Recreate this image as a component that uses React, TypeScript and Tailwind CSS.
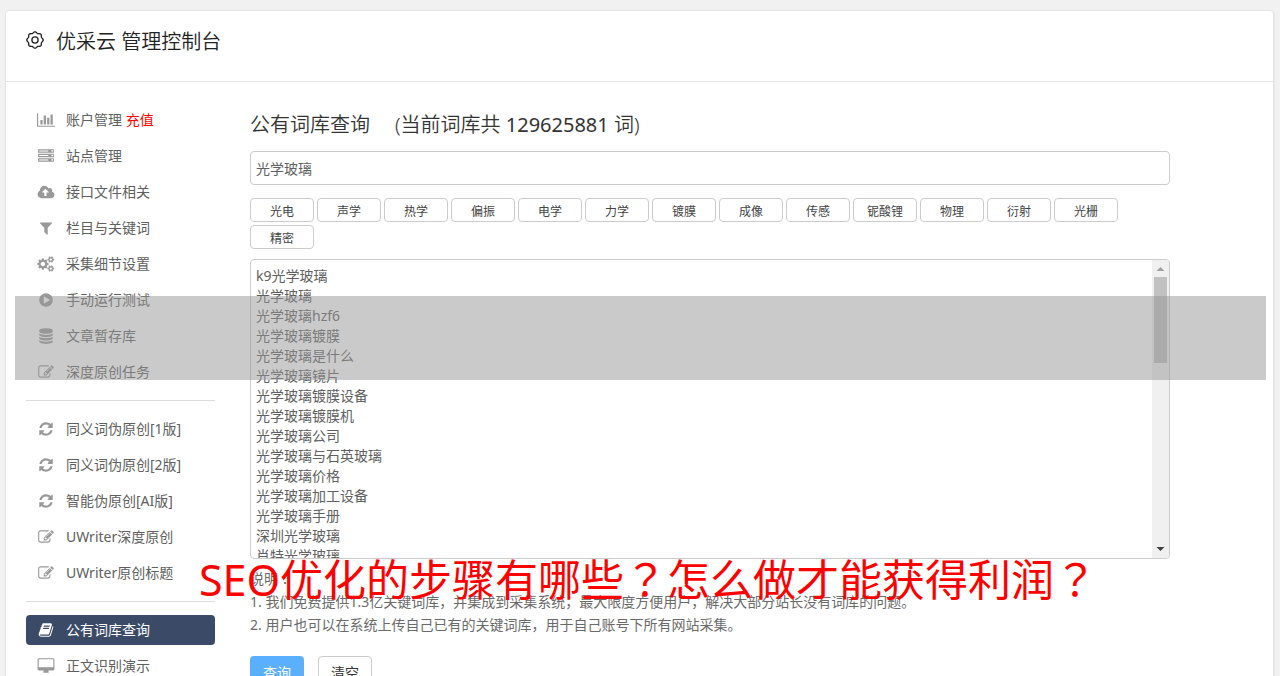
import type { ReactNode } from 'react';

type IconDef = { box: string; d: string };

const smallCog =
  'q0 16-149 31-12 27-30 52 51 113 51 138 0 4-4 7-122 71-124 71-8 0-46-47t-52-68q-20 2-30 2t-30-2q-14 21-52 68t-46 47q-2 0-124-71-4-3-4-7 0-25 51-138-18-25-30-52-149-15-149-31v-140q0-16 149-31 13-29 30-52-51-113-51-138 0-4 4-7 4-2 35-20t59-34 30-16q8 0 46 46.5t52 67.5q20-2 30-2t30 2q51-71 92-112l6-2q4 0 124 70 4 3 4 7 0 25-51 138 17 23 30 52 149 15 149 31z';

const disk =
  'q237 0 443-43t325-127v170q0 69-103 128t-280 93.5-385 34.5-385-34.5-280-93.5-103-128v-170q119 84 325 127t443 43z';

const icons: Record<string, IconDef> = {
  chart: {
    box: '0 0 2048 1792',
    d: 'M640 896v512h-256v-512h256zm384-512v1024h-256v-1024h256zm1024 1152v128h-2048v-1536h128v1408h1920zm-640-896v768h-256v-768h256zm384-384v1152h-256v-1152h256z',
  },
  server: {
    box: '-128 0 2048 1792',
    d: 'M128 1408h1024v-128h-1024v128zm0-512h1024v-128h-1024v128zm1568 448q0-40-28-68t-68-28-68 28-28 68 28 68 68 28 68-28 28-68zm-1568-960h1024v-128h-1024v128zm1568 448q0-40-28-68t-68-28-68 28-28 68 28 68 68 28 68-28 28-68zm0-512q0-40-28-68t-68-28-68 28-28 68 28 68 68 28 68-28 28-68zm96 832v384h-1792v-384h1792zm0-512v384h-1792v-384h1792zm0-512v384h-1792v-384h1792z',
  },
  upload: {
    box: '-64 0 2048 1792',
    d: 'M1280 928q0-14-9-23l-352-352q-9-9-23-9t-23 9l-351 351q-10 12-10 24 0 14 9 23t23 9h224v352q0 13 9.5 22.5t22.5 9.5h192q13 0 22.5-9.5t9.5-22.5v-352h224q13 0 22.5-9.5t9.5-22.5zm640 288q0 159-112.5 271.5t-271.5 112.5h-1088q-185 0-316.5-131.5t-131.5-316.5q0-130 70-240t188-165q-2-30-2-43 0-212 150-362t362-150q156 0 285.5 87t188.5 231q71-62 166-62 106 0 181 75t75 181q0 76-41 138 130 31 213.5 135.5t83.5 238.5z',
  },
  filter: {
    box: '-128 0 2048 1792',
    d: 'M1595 295q17 41-14 70l-493 493v742q0 42-39 59-13 5-25 5-27 0-45-19l-256-256q-19-19-19-45v-486l-493-493q-31-29-14-70 17-39 59-39h1280q42 0 59 39z',
  },
  cogs: {
    box: '-96 0 2048 1792',
    d:
      'M832 896q0-106-75-181t-181-75-181 75-75 181 75 181 181 75 181-75 75-181zm768 512q0-52-38-90t-90-38-90 38-38 90q0 53 37.5 90.5t90.5 37.5 90.5-37.5 37.5-90.5zm0-1024q0-52-38-90t-90-38-90 38-38 90q0 53 37.5 90.5t90.5 37.5 90.5-37.5 37.5-90.5zm-384 421v185q0 10-7 19.5t-16 10.5l-155 24q-11 35-32 76 34 48 90 115 7 11 7 20 0 12-7 19-23 30-82.5 89.5t-78.5 59.5q-11 0-21-7l-115-90q-37 19-77 31-11 108-23 155-7 24-30 24h-186q-11 0-20-7.5t-10-17.5l-23-153q-34-10-75-31l-118 89q-7 7-20 7-11 0-21-8-144-133-144-160 0-9 7-19 10-14 41-53t47-61q-23-44-35-82l-152-24q-10-1-17-9.5t-7-19.5v-185q0-10 7-19.5t16-10.5l155-24q11-35 32-76-34-48-90-115-7-11-7-20 0-12 7-20 22-30 82-89t79-59q11 0 21 7l115 90q34-18 77-32 11-108 23-154 7-24 30-24h186q11 0 20 7.5t10 17.5l23 153q34 10 75 31l118-89q8-7 20-7 11 0 21 8 144 133 144 160 0 8-7 19-12 16-42 54t-45 60q23 48 34 82l152 23q10 2 17 10.5t7 19.5zm640 533v140' +
      smallCog +
      'm0-1024v140' +
      smallCog,
  },
  play: {
    box: '-128 0 2048 1792',
    d: 'M896 128q209 0 385.5 103t279.5 279.5 103 385.5-103 385.5-279.5 279.5-385.5 103-385.5-103-279.5-279.5-103-385.5 103-385.5 279.5-279.5 385.5-103zm384 823q32-18 32-55t-32-55l-544-320q-31-19-64-1-32 19-32 56v640q0 37 32 56 16 8 32 8 17 0 32-9z',
  },
  database: {
    box: '-128 0 2048 1792',
    d:
      'M896 768' + disk + 'M896 1536' + disk + 'M896 1152' + disk +
      'M896 0q208 0 385 34.5t280 93.5 103 128v128q0 69-103 128t-280 93.5-385 34.5-385-34.5-280-93.5-103-128v-128q0-69 103-128t280-93.5 385-34.5z',
  },
  edit: {
    box: '-128 0 2048 1792',
    d: 'M888 1184l116-116-152-152-116 116v56h96v96h56zm440-720q-16-16-33 1l-350 350q-17 17-1 33t33-1l350-350q17-17 1-33zm80 594v190q0 119-84.5 203.5t-203.5 84.5h-832q-119 0-203.5-84.5t-84.5-203.5v-832q0-119 84.5-203.5t203.5-84.5h832q63 0 117 25 15 7 18 23 3 17-9 29l-49 49q-14 14-32 8-23-6-45-6h-832q-66 0-113 47t-47 113v832q0 66 47 113t113 47h832q66 0 113-47t47-113v-126q0-13 9-22l64-64q15-15 35-7t20 29zm-96-738l288 288-672 672h-288v-288zm444 132l-92 92-288-288 92-92q28-28 68-28t68 28l152 152q28 28 28 68t-28 68z',
  },
  refresh: {
    box: '-128 0 2048 1792',
    d: 'M1639 1056q0 5-1 7-64 268-268 434.5t-478 166.5q-146 0-282.5-55t-243.5-157l-129 129q-19 19-45 19t-45-19-19-45v-448q0-26 19-45t45-19h448q26 0 45 19t19 45-19 45l-137 137q71 66 161 102t187 36q134 0 250-65t186-179q11-17 53-117 8-23 30-23h192q13 0 22.5 9.5t9.5 22.5zm25-800v448q0 26-19 45t-45 19h-448q-26 0-45-19t-19-45 19-45l138-138q-148-137-349-137-134 0-250 65t-186 179q-11 17-53 117-8 23-30 23h-199q-13 0-22.5-9.5t-9.5-22.5v-7q65-268 270-434.5t480-166.5q146 0 284 55.5t245 156.5l130-129q19-19 45-19t45 19 19 45z',
  },
  book: {
    box: '-128 0 2048 1792',
    d: 'M1703 478q40 57 18 129l-275 906q-19 64-76.5 107.5t-122.5 43.5h-923q-77 0-148.5-53.5t-99.5-131.5q-24-67-2-127 0-4 3-27t4-37q1-8-3-21.5t-3-19.5q2-11 8-21t16.5-23.5 16.5-23.5q23-38 45-91.5t30-91.5q3-10 .5-30t-.5-28q3-11 17-28t17-23q21-36 42-92t25-90q1-9-2.5-32t.5-28q4-13 22-30.5t22-22.5q19-26 42.5-84.5t27.5-96.5q1-8-3-25.5t-2-26.5q2-8 9-18t18-23 17-21q8-12 16.5-30.5t15-35 16-36 19.5-32 26.5-23.5 36-11.5 47.5 5.5l-1 3q38-9 51-9h761q74 0 114 56t18 130l-274 906q-36 119-71.5 153.5t-128.5 34.5h-869q-27 0-38 15-11 16-1 43 24 70 144 70h923q29 0 56-15.5t35-41.5l300-987q7-22 5-57 38 15 59 43zm-1064 2q-4 13 2 22.5t20 9.5h608q13 0 25.5-9.5t16.5-22.5l21-64q4-13-2-22.5t-20-9.5h-608q-13 0-25.5 9.5t-16.5 22.5zm-83 256q-4 13 2 22.5t20 9.5h608q13 0 25.5-9.5t16.5-22.5l21-64q4-13-2-22.5t-20-9.5h-608q-13 0-25.5 9.5t-16.5 22.5z',
  },
  desktop: {
    box: '-128 0 2048 1792',
    d: 'M1728 992v-832q0-13-9.5-22.5t-22.5-9.5h-1600q-13 0-22.5 9.5t-9.5 22.5v832q0 13 9.5 22.5t22.5 9.5h1600q13 0 22.5-9.5t9.5-22.5zm128-832v1088q0 66-47 113t-113 47h-544q0 37 16 77.5t32 71 16 43.5q0 26-19 45t-45 19h-512q-26 0-45-19t-19-45q0-14 16-44t32-70 16-78h-544q-66 0-113-47t-47-113v-1088q0-66 47-113t113-47h1600q66 0 113 47t47 113z',
  },
};

function Icon({ name }: { name: string }) {
  const { box, d } = icons[name];
  return (
    <svg viewBox={box} className="h-4 w-[18px] shrink-0" fill="currentColor" aria-hidden="true">
      <path d={d} />
    </svg>
  );
}

// Outline of a cog whose rim is made of round lobes.
function GearIcon() {
  const lobes = 8;
  const points = Array.from({ length: 96 }, (_, i) => {
    const a = (i / 96) * Math.PI * 2;
    const r = 7.6 + 0.6 * Math.cos(lobes * a);
    return `${(9 + r * Math.sin(a)).toFixed(2)} ${(9 - r * Math.cos(a)).toFixed(2)}`;
  });
  return (
    <svg viewBox="0 0 18 18" className="size-[18px] shrink-0" fill="none" stroke="currentColor" strokeWidth="1.3" aria-hidden="true">
      <path d={`M${points.join('L')}Z`} />
      <circle cx="9" cy="9" r="3.1" />
    </svg>
  );
}

type Item = { icon: string; label: string; extra?: string; active?: boolean };

const groups: Item[][] = [
  [
    { icon: 'chart', label: '账户管理', extra: '充值' },
    { icon: 'server', label: '站点管理' },
    { icon: 'upload', label: '接口文件相关' },
    { icon: 'filter', label: '栏目与关键词' },
    { icon: 'cogs', label: '采集细节设置' },
    { icon: 'play', label: '手动运行测试' },
    { icon: 'database', label: '文章暂存库' },
    { icon: 'edit', label: '深度原创任务' },
  ],
  [
    { icon: 'refresh', label: '同义词伪原创[1版]' },
    { icon: 'refresh', label: '同义词伪原创[2版]' },
    { icon: 'refresh', label: '智能伪原创[AI版]' },
    { icon: 'edit', label: 'UWriter深度原创' },
    { icon: 'edit', label: 'UWriter原创标题' },
  ],
  [
    { icon: 'book', label: '公有词库查询', active: true },
    { icon: 'desktop', label: '正文识别演示' },
  ],
];

const tags = ['光电', '声学', '热学', '偏振', '电学', '力学', '镀膜', '成像', '传感', '铌酸锂', '物理', '衍射', '光栅', '精密'];

const results = [
  'k9光学玻璃',
  '光学玻璃',
  '光学玻璃hzf6',
  '光学玻璃镀膜',
  '光学玻璃是什么',
  '光学玻璃镜片',
  '光学玻璃镀膜设备',
  '光学玻璃镀膜机',
  '光学玻璃公司',
  '光学玻璃与石英玻璃',
  '光学玻璃价格',
  '光学玻璃加工设备',
  '光学玻璃手册',
  '深圳光学玻璃',
  '肖特光学玻璃',
].join('\n');

function NavItem({ icon, label, extra, active }: Item) {
  return (
    <li>
      <a
        href="#"
        className={
          active
            ? 'flex h-[30px] items-center gap-[11px] rounded bg-[#3b4a66] pl-[11px] text-white'
            : 'flex h-[30px] items-center gap-[11px] rounded pl-[11px] text-[#999]'
        }
      >
        <Icon name={icon} />
        <span className={active ? 'text-white' : 'text-[#606060]'}>
          {label}
          {extra && <span className="text-[#f00]"> {extra}</span>}
        </span>
      </a>
    </li>
  );
}

function Sidebar() {
  return (
    <nav className="w-[189px] shrink-0 divide-y divide-[#ddd]">
      {groups.map((items, i) => (
        <ul key={i} className="flex flex-col gap-1.5 py-[13px]">
          {items.map((item) => (
            <NavItem key={item.label} {...item} />
          ))}
        </ul>
      ))}
    </nav>
  );
}

function ScrollTrack() {
  return (
    <div className="flex w-[17px] shrink-0 flex-col items-center bg-[#f0f0f0]" aria-hidden="true">
      <svg viewBox="0 0 17 17" className="size-[17px]" fill="#a0a0a0">
        <path d="M4.500 11h8L8.500 7z" />
      </svg>
      <div className="h-[86px] w-[13px] bg-[#c1c1c1]" />
      <svg viewBox="0 0 17 17" className="mt-auto size-[17px]" fill="#404040">
        <path d="M4.500 6h8L8.500 10z" />
      </svg>
    </div>
  );
}

// Full-width punctuation drawn in the middle of its square.
function Centered({ children }: { children: ReactNode }) {
  return <span className="font-['Noto_Sans_CJK_TC',sans-serif]">{children}</span>;
}

function Overlay({ children }: { children: ReactNode }) {
  return <div className="pointer-events-none absolute inset-0 overflow-hidden">{children}</div>;
}

export default function App() {
  return (
    <div className="relative h-screen overflow-hidden bg-[#f1f1f1] pt-2.5 pr-1.5 pl-[5px] font-['Noto_Sans','Noto_Sans_CJK_SC',sans-serif] text-sm text-[#606060]">
      <div className="min-h-screen rounded border border-[#e4e4e4] bg-white shadow-[1px_1px_0_#e9e9e9]">
        <header className="flex h-[71px] items-start gap-3 border-b border-[#e4e4e4] pt-[15px] pl-5 text-[#222]">
          <span className="pt-[5px]">
            <GearIcon />
          </span>
          <h1 className="text-xl leading-8 font-[350]">优采云 管理控制台</h1>
        </header>
        <div className="flex gap-[35px] pt-[10px] pr-[103px] pl-5">
          <Sidebar />
          <main className="min-w-0 flex-1 pt-[17px]">
            <h2 className="flex h-8 items-center gap-[25px] text-xl font-[350] text-[#333]">
              <label htmlFor="keyword">公有词库查询</label>
              <span>
                (当前词库共 <span className="font-normal">129625881</span> 词)
              </span>
            </h2>
            <input
              id="keyword"
              type="text"
              defaultValue="光学玻璃"
              className="mt-2.5 block h-[34px] w-full rounded border border-[#ccc] px-[5px] text-[#606060]"
            />
            <div className="mt-[13px] flex flex-wrap gap-[3px]">
              {tags.map((tag) => (
                <button key={tag} type="button" className="h-6 w-16 rounded border border-[#ccc] bg-white pt-[3px] text-xs text-[#444]">
                  {tag}
                </button>
              ))}
            </div>
            <div className="mt-2.5 flex h-[300px] overflow-hidden rounded border border-[#ccc]">
              <textarea
                aria-label="词库结果"
                defaultValue={results}
                className="min-w-0 flex-1 resize-none overflow-hidden px-[5px] pt-1.5 leading-5 text-[#606060]"
              />
              <ScrollTrack />
            </div>
            <div className="mt-2 leading-[23px] text-[#6a6a6a]">
              <p>
                说明<Centered>：</Centered>
              </p>
              <p>1. 我们免费提供1.3亿关键词库，并集成到采集系统，最大限度方便用户，解决大部分站长没有词库的问题。</p>
              <p>2. 用户也可以在系统上传自己已有的关键词库，用于自己账号下所有网站采集。</p>
            </div>
            <div className="mt-5 flex gap-3.5">
              <button type="button" className="h-[34px] w-[54px] rounded bg-[#5aafff] text-white">
                查询
              </button>
              <button type="button" className="h-[34px] w-[54px] rounded border border-[#ccc] bg-white text-[#333]">
                清空
              </button>
            </div>
          </main>
        </div>
      </div>
      <Overlay>
        <div className="absolute top-[296px] right-3.5 left-[15px] h-[84px] bg-[#969696]/50" />
        <p className="absolute top-[545px] left-[199px] text-[43px] leading-[64px] whitespace-nowrap text-[#f00]">
          SEO优化的步骤有哪些<Centered>？</Centered>怎么做才能获得利润<Centered>？</Centered>
        </p>
      </Overlay>
    </div>
  );
}
